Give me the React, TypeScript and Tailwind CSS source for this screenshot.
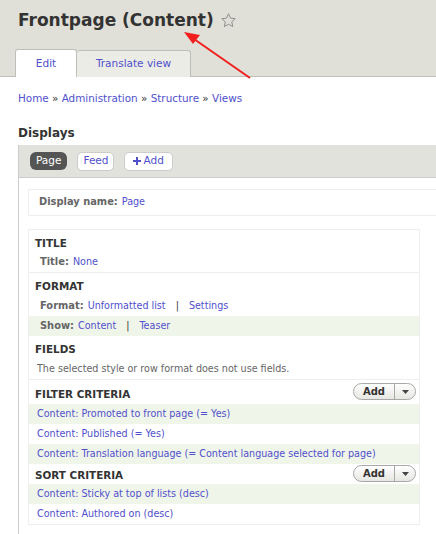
import React from 'react';

const link = 'text-[#5050cc]';

function AddButton() {
  return (
    <div className="flex h-[17px] w-[63px] items-stretch overflow-hidden rounded-full border border-[#a8a8a8] bg-gradient-to-b from-white to-[#e6e6e2] text-[10px] font-bold leading-[15px] text-[#333]">
      <span className="flex flex-1 items-center justify-center">Add</span>
      <span className="flex w-[21px] items-center justify-center border-l border-[#a8a8a8]">
        <svg width="7" height="4" viewBox="0 0 7 4">
          <path d="M0 0h7L3.5 4z" fill="#444" />
        </svg>
      </span>
    </div>
  );
}

function Item({ children, green }: { children: React.ReactNode; green?: boolean }) {
  return (
    <div className={`flex h-[20px] items-center whitespace-nowrap pl-[8px] text-[9.6px] ${green ? 'bg-[#f0f5ea]' : ''}`}>
      {children}
    </div>
  );
}

function Label({ name, children, green }: { name: string; children: React.ReactNode; green?: boolean }) {
  return (
    <div className={`flex h-[20px] items-center whitespace-nowrap pl-[11px] text-[9.6px] ${green ? 'bg-[#f0f5ea]' : ''}`}>
      <span className="mr-[4px] text-[9.9px] font-bold text-[#666]">{name}</span>
      {children}
    </div>
  );
}

function Heading({ children }: { children: React.ReactNode }) {
  return <div className="text-[10.4px] font-bold leading-[14px] text-[#333]">{children}</div>;
}

export default function App() {
  return (
    <div className="relative h-[534px] w-[436px] overflow-hidden bg-white font-['DejaVu_Sans',sans-serif] text-[#333]">
      {/* header */}
      <header className="border-b border-[#bfbfba] bg-[#e0e0d8] pl-[18px] pt-[8px]">
        <div className="flex items-center gap-[6px]">
          <h1 className="text-[17px] font-bold leading-[24px] text-[#333]">Frontpage (Content)</h1>
          <svg width="17" height="17" viewBox="0 0 24 24" className="mt-[1px]">
            <path
              d="M12 2.5l2.9 6.2 6.6.7-4.9 4.6 1.4 6.6L12 17.3l-5.9 3.3 1.4-6.6-4.9-4.6 6.6-.7z"
              fill="none"
              stroke="#8f8f8a"
              strokeWidth="1.4"
              strokeLinejoin="round"
            />
          </svg>
        </div>
        <nav className="-mb-px ml-[-3px] mt-[17px] flex text-[10.5px]">
          <a className={`flex h-[28px] w-[62px] items-center justify-center rounded-t-[3px] border border-b-0 border-[#bfbfba] bg-white ${link}`}>
            Edit
          </a>
          <a className={`flex h-[27px] w-[114px] items-center justify-center self-end rounded-t-[3px] border border-b-0 border-l-0 border-[#bfbfba] bg-[#ecece6] ${link}`}>
            Translate view
          </a>
        </nav>
      </header>

      {/* breadcrumb */}
      <div className="pl-[18px] pt-[13px] text-[10.4px] leading-[16px]">
        <span className={link}>Home</span> » <span className={link}>Administration</span> »{' '}
        <span className={link}>Structure</span> » <span className={link}>Views</span>
      </div>

      <h2 className="mt-[19px] pl-[18px] text-[12px] font-bold leading-[16px] text-[#333]">Displays</h2>

      {/* displays panel */}
      <div className="ml-[18px] mt-[4px] border-l border-[#ccc]">
        <div className="flex h-[33px] items-center gap-[10px] border-b border-[#ccc] bg-[#e1e2dc] pl-[11px] text-[10.5px]">
          <span className="flex h-[18px] items-center rounded-[6px] bg-[#555] px-[6px] text-white">Page</span>
          <span className={`flex h-[19px] items-center rounded-[5px] border border-[#ccc] bg-white px-[5px] ${link}`}>Feed</span>
          <span className={`flex h-[19px] items-center gap-[2px] rounded-[5px] border border-[#ccc] bg-white px-[8px] ${link}`}>
            <svg width="8" height="8" viewBox="0 0 8 8">
              <path d="M3 0h2v3h3v2H5v3H3V5H0V3h3z" fill="#5050cc" />
            </svg>
            Add
          </span>
        </div>

        <div className="pl-[9px] pt-[11px]">
          <div className="flex h-[27px] w-[440px] items-center border border-[#eee] pl-[10px] text-[9.6px]">
            <span className="mr-[4px] text-[9.9px] font-bold text-[#666]">Display name:</span>
            <span className={link}>Page</span>
          </div>

          <div className="mt-[13px] w-[392px] border border-[#eee]">
            {/* title */}
            <div className="border-b border-[#eee]">
              <div className="h-[22px] pl-[6px] pt-[6px]">
                <Heading>TITLE</Heading>
              </div>
              <Label name="Title:">
                <span className={link}>None</span>
              </Label>
            </div>

            {/* format */}
            <div className="h-[23px] pl-[6px] pt-[6px]">
              <Heading>FORMAT</Heading>
            </div>
            <Label name="Format:">
              <span className={link}>Unformatted list</span>
              <span className="mx-[10px] text-[#333]">|</span>
              <span className={link}>Settings</span>
            </Label>
            <Label name="Show:" green>
              <span className={link}>Content</span>
              <span className="mx-[10px] text-[#333]">|</span>
              <span className={link}>Teaser</span>
            </Label>

            {/* fields */}
            <div className="border-b border-[#eee]">
              <div className="h-[23px] pl-[6px] pt-[6px]">
                <Heading>FIELDS</Heading>
              </div>
              <div className="flex h-[20px] items-center pl-[8px] text-[9.6px] text-[#666]">
                The selected style or row format does not use fields.
              </div>
            </div>

            {/* filter */}
            <div className="flex h-[24px] items-start justify-between pl-[6px] pr-[3px] pt-[3px]">
              <div className="mt-[4px]">
                <Heading>FILTER CRITERIA</Heading>
              </div>
              <AddButton />
            </div>
            <Item green>
              <span className={link}>Content: Promoted to front page (= Yes)</span>
            </Item>
            <Item>
              <span className={link}>Content: Published (= Yes)</span>
            </Item>
            <Item green>
              <span className={link}>Content: Translation language (= Content language selected for page)</span>
            </Item>

            {/* sort */}
            <div className="flex h-[20px] items-start justify-between pl-[6px] pr-[3px] pt-[1px]">
              <div className="mt-[3px]">
                <Heading>SORT CRITERIA</Heading>
              </div>
              <AddButton />
            </div>
            <Item green>
              <span className={link}>Content: Sticky at top of lists (desc)</span>
            </Item>
            <Item>
              <span className={link}>Content: Authored on (desc)</span>
            </Item>
          </div>
          <div className="h-[20px]" />
        </div>
      </div>

      {/* annotation arrow */}
      <svg className="pointer-events-none absolute left-0 top-0" width="436" height="534">
        <line x1="250" y1="78" x2="194" y2="39" stroke="#f21f1f" strokeWidth="2" />
        <path d="M184 32 L200 35 L193 44 Z" fill="#f21f1f" />
      </svg>
    </div>
  );
}
